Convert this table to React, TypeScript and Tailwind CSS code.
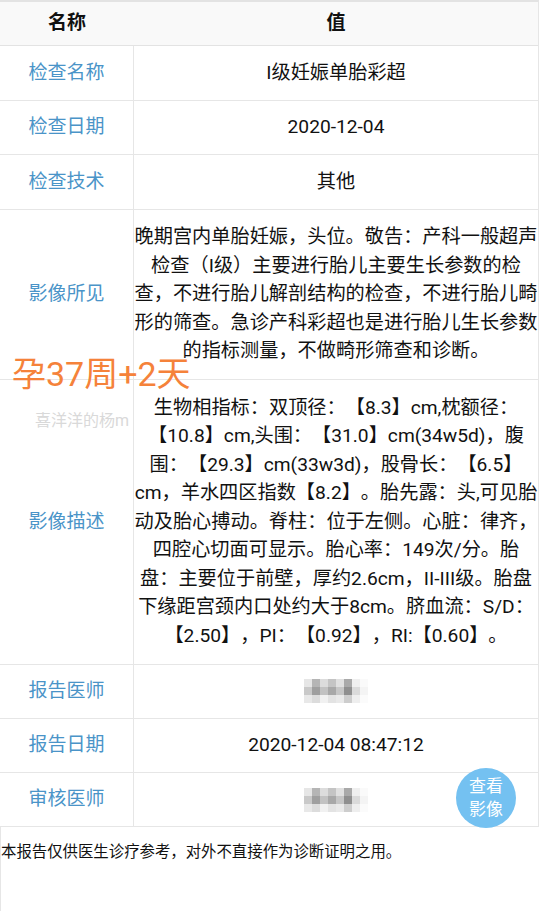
import React from "react";

const font = { fontFamily: 'Roboto, "Noto Sans CJK SC", sans-serif' };

const pix1 = [
  ["#e6e6e6", "#b5b5b5", "#dcdcdc", "#c4c4c4", "#e0e0e0", "#a9a9a9", "#efefef", "#fafafa"],
  ["#c9c9c9", "#9f9f9f", "#c2c2c2", "#a8a8a8", "#c6c6c6", "#8f8f8f", "#dadada", "#f4f4f4"],
  ["#e8e8e8", "#dcdcdc", "#f1f1f1", "#e3e3e3", "#e9e9e9", "#cdcdcd", "#eeeeee", "#fbfbfb"],
];

function Pixel() {
  return (
    <div className="flex flex-col">
      {pix1.map((r, i) => (
        <div key={i} className="flex">
          {r.map((c, j) => (
            <div key={j} className="w-[8px] h-[8px]" style={{ backgroundColor: c }} />
          ))}
        </div>
      ))}
    </div>
  );
}

function Row({ label, children, multi = false }: { label: string; children: React.ReactNode; multi?: boolean }) {
  return (
    <div className="flex border-b border-[#e6e6e6] min-h-[54px]">
      <div className="w-[134px] shrink-0 border-r border-[#e6e6e6] flex items-center justify-center text-[19px] text-[#4a94c8]">
        {label}
      </div>
      <div
        className={`flex-1 flex items-center justify-center text-center px-0 text-[19.2px] leading-[28.5px] text-[#111] [text-spacing-trim:space-all] ${
          multi ? "py-[13.5px]" : "py-[12.5px]"
        }`}
      >
        {children}
      </div>
    </div>
  );
}

export default function App() {
  return (
    <div className="w-[540px] h-[911px] bg-white relative overflow-hidden [text-spacing-trim:space-all]" style={font}>
      <div className="w-[539px] border-t-2 border-[#e3e3e3] border-r border-r-[#e6e6e6]">
        <div className="flex bg-[#f9f9f9] border-b border-[#e3e3e3] h-[44px]">
          <div className="w-[134px] shrink-0 flex items-center justify-center text-[19px] font-bold text-[#111]">名称</div>
          <div className="flex-1 flex items-center justify-center text-[19px] font-bold text-[#111]">值</div>
        </div>
        <Row label="检查名称">I级妊娠单胎彩超</Row>
        <Row label="检查日期">2020-12-04</Row>
        <Row label="检查技术">其他</Row>
        <Row label="影像所见" multi>
          晚期宫内单胎妊娠，头位。敬告：产科一般超声检查（I级）主要进行胎儿主要生长参数的检查，不进行胎儿解剖结构的检查，不进行胎儿畸形的筛查。急诊产科彩超也是进行胎儿生长参数的指标测量，不做畸形筛查和诊断。
        </Row>
        <Row label="影像描述" multi>
          生物相指标：双顶径：【8.3】cm,枕额径：【10.8】cm,头围：【31.0】cm(34w5d)，腹围：【29.3】cm(33w3d)，股骨长：【6.5】cm，羊水四区指数【8.2】。胎先露：头,可见胎动及胎心搏动。脊柱：位于左侧。心脏：律齐，四腔心切面可显示。胎心率：149次/分。胎盘：主要位于前壁，厚约2.6cm，II-III级。胎盘下缘距宫颈内口处约大于8cm。脐血流：S/D：【2.50】，PI：【0.92】，RI:【0.60】。
        </Row>
        <Row label="报告医师">
          <Pixel />
        </Row>
        <Row label="报告日期">2020-12-04 08:47:12</Row>
        <Row label="审核医师">
          <Pixel />
        </Row>
      </div>
      <div className="border-l border-[#e6e6e6] h-[100px] pt-[15px] text-[15.4px] text-[#111] leading-[20px]">
        本报告仅供医生诊疗参考，对外不直接作为诊断证明之用。
      </div>

      <div className="absolute left-[12px] top-[354px] text-[34px] leading-[40px] text-[#f5823a] whitespace-nowrap">
        孕37周+2天
      </div>
      <div className="absolute left-[35px] top-[411px] text-[16px] leading-[20px] text-[#d9d9d9] whitespace-nowrap">
        喜洋洋的杨m
      </div>
      <div className="absolute left-[456px] top-[768px] w-[60px] h-[60px] rounded-full bg-[#74c1f1] flex flex-col items-center justify-center text-white text-[17px] leading-[23px]">
        <span>查看</span>
        <span>影像</span>
      </div>
    </div>
  );
}
